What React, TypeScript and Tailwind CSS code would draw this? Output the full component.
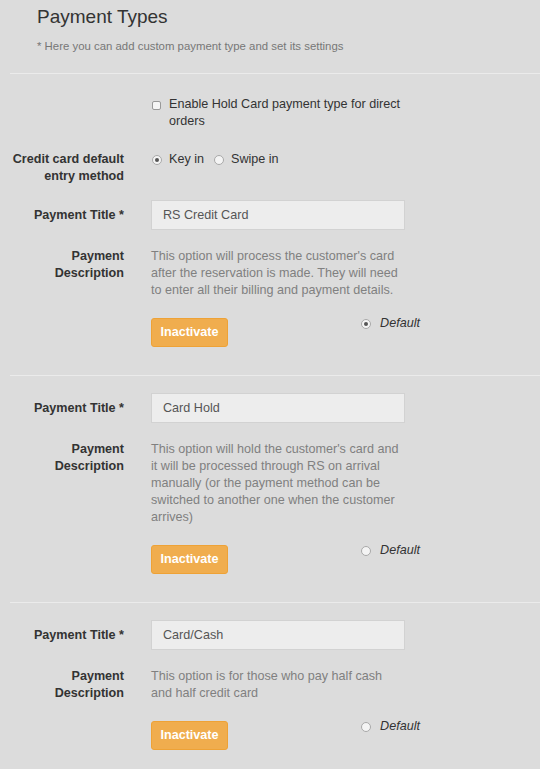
import React from "react";

type PaymentType = {
  title: string;
  description: string[];
  isDefault: boolean;
};

const paymentTypes: PaymentType[] = [
  {
    title: "RS Credit Card",
    description: [
      "This option will process the customer's card",
      "after the reservation is made. They will need",
      "to enter all their billing and payment details.",
    ],
    isDefault: true,
  },
  {
    title: "Card Hold",
    description: [
      "This option will hold the customer's card and",
      "it will be processed through RS on arrival",
      "manually (or the payment method can be",
      "switched to another one when the customer",
      "arrives)",
    ],
    isDefault: false,
  },
  {
    title: "Card/Cash",
    description: ["This option is for those who pay half cash", "and half credit card"],
    isDefault: false,
  },
];

function Radio({ checked }: { checked: boolean }) {
  return (
    <span className="flex h-[10px] w-[10px] shrink-0 items-center justify-center rounded-full border border-[#a9a9a9] bg-[#f4f4f4]">
      {checked ? <span className="h-[4px] w-[4px] rounded-full bg-[#555]" /> : null}
    </span>
  );
}

function Row({ label, children, className = "" }: { label: React.ReactNode; children: React.ReactNode; className?: string }) {
  return (
    <div className={`flex ${className}`}>
      <div className="w-[118px] shrink-0 text-right text-[12.6px] font-bold leading-[17px] text-[#333]">{label}</div>
      <div className="ml-[27px] w-[270px]">{children}</div>
    </div>
  );
}

function PaymentBlock({ item }: { item: PaymentType }) {
  return (
    <>
      <Row label="Payment Title *" className="items-center">
        <div className="flex h-[30px] w-[254px] items-center border border-[#d2d2d2] bg-[#ededed] pl-[11px] text-[12.6px] text-[#555]">
          {item.title}
        </div>
      </Row>
      <Row label={<>Payment<br />Description</>} className="mt-[18px]">
        <p className="text-[12.6px] leading-[17px] text-[#808080]">
          {item.description.map((line) => (
            <span key={line} className="block whitespace-nowrap">
              {line}
            </span>
          ))}
        </p>
      </Row>
      <Row label="" className="mt-[19px]">
        <div className="flex items-start justify-between">
          <button
            type="button"
            className="h-[29px] w-[77px] rounded-[3px] border border-[#eea236] bg-[#f0ad4e] text-[12.6px] font-bold text-white"
          >
            Inactivate
          </button>
          <div className="-mt-[3px] flex items-center gap-[9px] pr-[1px]">
            <Radio checked={item.isDefault} />
            <span className="text-[12.6px] italic leading-[17px] text-[#333]">Default</span>
          </div>
        </div>
      </Row>
    </>
  );
}

export default function App() {
  return (
    <div className="min-h-[769px] bg-[#dcdcdc] font-['Liberation_Sans',Arial,sans-serif]">
      <div className="px-[37px] pt-[5px]">
        <h1 className="text-[19px] leading-[24px] text-[#333]">Payment Types</h1>
        <p className="mt-[10px] text-[11.4px] leading-[15px] text-[#777]">
          * Here you can add custom payment type and set its settings
        </p>
      </div>

      <div className="ml-[10px] mt-[19px] h-px bg-[#ebebeb]" />

      <section className="pl-[6px] pt-[22px]">
        <Row label="">
          <label className="flex items-start gap-[8px]">
            <span className="mt-[5px] ml-[1px] h-[9px] w-[9px] shrink-0 rounded-[2px] border border-[#999] bg-[#f5f5f5]" />
            <span className="w-[238px] text-[12.6px] leading-[17px] text-[#333]">
              Enable Hold Card payment type for direct orders
            </span>
          </label>
        </Row>

        <Row label={<>Credit card default<br />entry method</>} className="mt-[21px]">
          <div className="flex items-center text-[12.6px] leading-[17px] text-[#333]">
            <span className="ml-[1px]"><Radio checked /></span>
            <span className="ml-[7px]">Key in</span>
            <span className="ml-[10px]"><Radio checked={false} /></span>
            <span className="ml-[7px]">Swipe in</span>
          </div>
        </Row>

        <div className="mt-[15px]">
          <PaymentBlock item={paymentTypes[0]} />
        </div>
      </section>

      {paymentTypes.slice(1).map((item) => (
        <div key={item.title}>
          <div className="ml-[10px] mt-[28px] h-px bg-[#ebebeb]" />
          <section className="pl-[6px] pt-[17px]">
            <PaymentBlock item={item} />
          </section>
        </div>
      ))}
    </div>
  );
}
